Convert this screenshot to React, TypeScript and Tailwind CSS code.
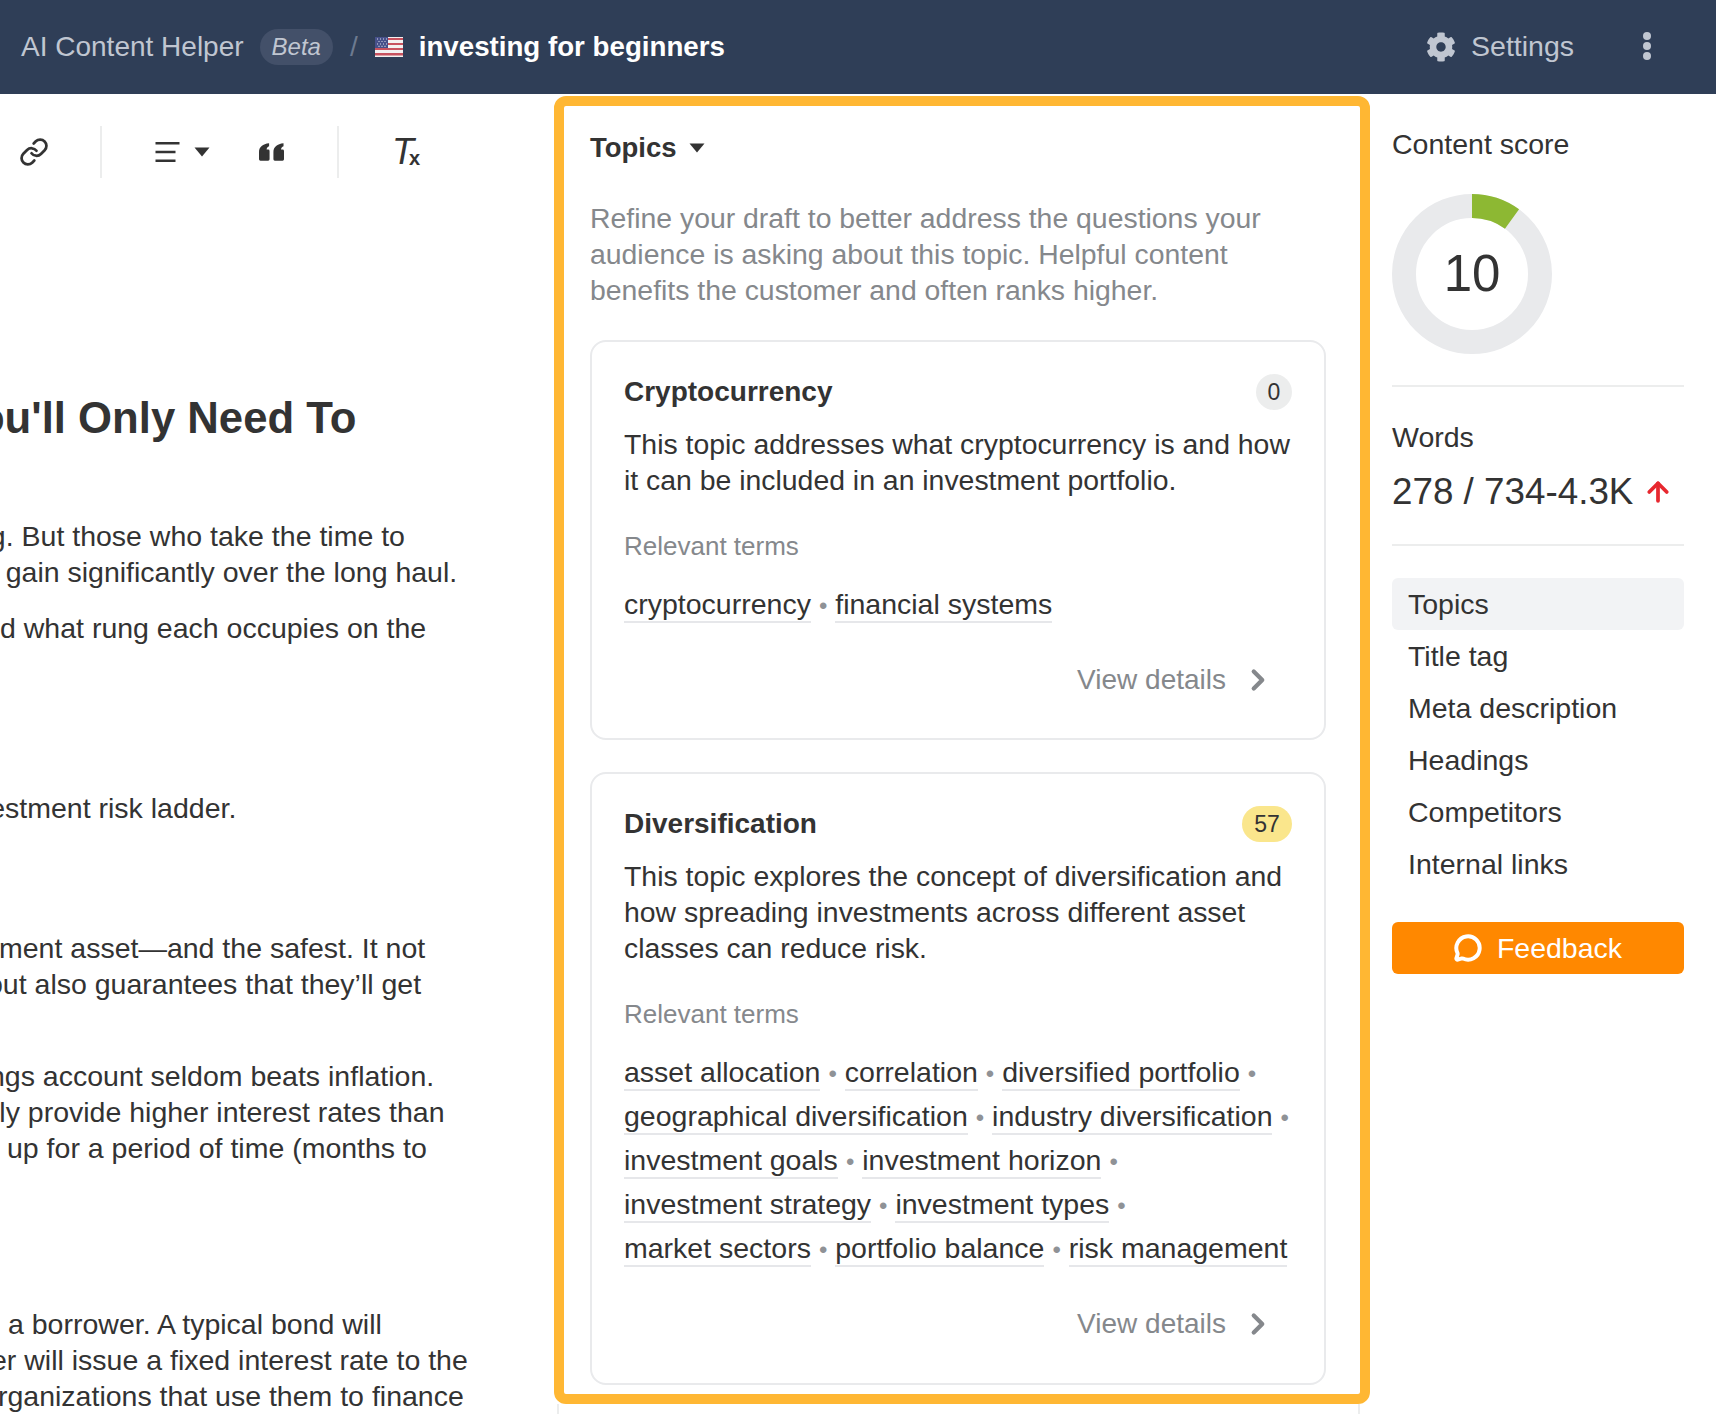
import React from 'react';
import { ArrowUp, ChevronRight, Link, MessageCircle } from 'lucide-react';
import { FaCog } from 'react-icons/fa';

const draftBlocks = [
  { top: 0, lines: [{ text: 'ng. But those who take the time to', x: -26 }, { text: 'to gain significantly over the long haul.', x: -26 }] },
  { top: 20, lines: [{ text: 'd what rung each occupies on the', x: 0 }] },
  { top: 144, lines: [{ text: 'vestment risk ladder.', x: -25 }] },
  { top: 104, lines: [{ text: 'ment asset—and the safest. It not', x: -1 }, { text: 'out also guarantees that they’ll get', x: -13 }] },
  { top: 56, lines: [{ text: 'ngs account seldom beats inflation.', x: -11 }, { text: 'lly provide higher interest rates than', x: -7 }, { text: 'up for a period of time (months to', x: 7 }] },
  { top: 140, lines: [{ text: 'a borrower. A typical bond will', x: 8 }, { text: 'er will issue a fixed interest rate to the', x: -9 }, { text: 'rganizations that use them to finance', x: -2 }] },
];

const navItems = ['Topics', 'Title tag', 'Meta description', 'Headings', 'Competitors', 'Internal links'];

function Caret({ className }: { className: string }) {
  return (
    <svg viewBox="0 0 16 10" className={className} fill="currentColor">
      <path d="M0.5 0.5h15L8 9.5z" />
    </svg>
  );
}

function Flag() {
  return (
    <svg viewBox="0 0 28 20" className="w-[28px] h-[20px] shrink-0">
      <rect width="28" height="20" fill="#f4f1f1" />
      <path d="M0 1h28v2H0zM0 6h28v2H0zM0 11h28v2H0zM0 16h28v2.5H0z" fill="#c8525f" />
      <rect width="13" height="11" fill="#46508a" />
      <path d="M2 2h1M5 2h1M8 2h1M11 2h1M3.5 4.5h1M6.5 4.5h1M9.5 4.5h1M2 7h1M5 7h1M8 7h1M11 7h1M3.500 9.300h1M6.500 9.300h1M9.500 9.300h1" stroke="#d9dce8" strokeWidth="1.2" />
    </svg>
  );
}

function Terms({ items }: { items: string[] }) {
  return (
    <div className="text-[#333] text-[28.500px] leading-[44px]">
      {items.map((term, i) => (
        <React.Fragment key={term}>
          <span className="whitespace-nowrap border-b-2 border-[#e6e7ea] pb-[1px]">{term}</span>
          {i < items.length - 1 && <span className="text-[#8f9296] text-[24px] leading-none ml-[8px]">•</span>}{' '}
        </React.Fragment>
      ))}
    </div>
  );
}

function TopicCard({ title, score, badge, text, terms, className }: { title: string; score: string; badge: string; text: string; terms: string[]; className: string }) {
  return (
    <div className={`border-2 border-[#e9eaec] rounded-[16px] px-[32px] ${className}`}>
      <div className="flex items-center justify-between h-[38px] mt-[31px]">
        <span className="text-[28px] font-bold text-[#333]">{title}</span>
        <span className={`h-[36px] rounded-full flex items-center justify-center text-[23px] text-[#333] ${badge}`}>{score}</span>
      </div>
      <p className="text-[#333] text-[28.400px] leading-[36px] mt-[15px] -mr-[2px]">{text}</p>
      <div className="text-[#85888c] text-[26px] leading-[36px] mt-[30px] mb-[18px]">Relevant terms</div>
      <Terms items={terms} />
      <div className="flex items-center justify-end text-[#85888c] text-[28px] leading-[36px] mt-[36px] mr-[24px]">
        <span>View details</span>
        <ChevronRight className="w-[34px] h-[34px] ml-[15px] -mr-[7px]" strokeWidth={3} />
      </div>
    </div>
  );
}

export default function App() {
  return (
    <div className="w-[1716px] h-[1414px] overflow-hidden bg-white flex flex-col font-['Liberation_Sans',Arial,sans-serif]">
      <header className="h-[94px] shrink-0 bg-[#2f3e57] flex items-center pl-[21px] pr-[65px] text-[28px]">
        <span className="text-[#c0c6d1]">AI Content Helper</span>
        <span className="ml-[16px] h-[36px] px-[12px] rounded-full bg-[#435069] text-[#c0c6d1] italic text-[24px] flex items-center">Beta</span>
        <span className="ml-[17px] mr-[17px] text-[#6d7a90]">/</span>
        <Flag />
        <span className="ml-[16px] text-white font-bold text-[27.700px]">investing for beginners</span>
        <FaCog className="ml-auto -translate-x-[2px] text-[#c0c6d1] w-[30px] h-[30px]" />
        <span className="ml-[13px] -mt-[2px] text-[#c0c6d1] text-[28.500px]">Settings</span>
        <span className="ml-[69px] -mt-[2px] flex flex-col gap-[2px]">
          <span className="w-[8px] h-[8px] rounded-full bg-[#c0c6d1]" />
          <span className="w-[8px] h-[8px] rounded-full bg-[#c0c6d1]" />
          <span className="w-[8px] h-[8px] rounded-full bg-[#c0c6d1]" />
        </span>
      </header>

      <div className="flex flex-1 min-h-0">
        <main className="w-[554px] shrink-0 overflow-hidden text-[#333]">
          <div className="flex items-center h-[54px] mt-[31px] text-[#333]">
            <Link className="w-[30px] h-[30px] ml-[19px]" strokeWidth={2.2} />
            <span className="w-[2px] h-[52px] bg-[#eceded] ml-[51px]" />
            <svg viewBox="0 0 24 20" className="w-[25px] h-[20px] ml-[53px]" fill="currentColor">
              <path d="M0 0h24v2.400H0zM0 8.800h20v2.400H0zM0 17.600h20V20H0z" />
            </svg>
            <Caret className="w-[16px] h-[10px] ml-[14px]" />
            <svg viewBox="0 0 26 18" className="w-[25px] h-[18px] ml-[49px]" fill="currentColor">
              <path d="M10.500 0v3C9 3.600 8 5 7.900 6.500h1.600a1.500 1.500 0 0 1 1.500 1.500v8.500a1.500 1.500 0 0 1-1.500 1.500h-8A1.500 1.500 0 0 1 0 16.500V9C0 4 4 .6 10.500 0zM25.500 0v3c-1.500.6-2.500 2-2.600 3.500h1.600A1.500 1.500 0 0 1 26 8v8.500a1.500 1.500 0 0 1-1.500 1.500h-8a1.500 1.500 0 0 1-1.500-1.500V9c0-5 4-8.400 10.500-9z" />
            </svg>
            <span className="w-[2px] h-[52px] bg-[#eceded] ml-[53px]" />
            <span className="ml-[53px] relative italic text-[36px] leading-none">T<span className="not-italic font-bold text-[20px] absolute left-[17px] top-[14px]">x</span></span>
          </div>

          <h1 className="text-[43.700px] leading-[50px] font-bold whitespace-nowrap mt-[214px] -ml-[48px] text-[#333]">You'll Only Need To</h1>

          <div className="mt-[75px] text-[28.500px] leading-[36px] whitespace-nowrap">
            {draftBlocks.map((block, i) => (
              <div key={i} style={{ marginTop: block.top }}>
                {block.lines.map((line) => (
                  <div key={line.text} style={{ marginLeft: line.x }}>{line.text}</div>
                ))}
              </div>
            ))}
          </div>
        </main>

        <section className="w-[816px] shrink-0 flex flex-col">
          <div className="mt-[2px] h-[1308px] shrink-0 border-[10px] border-[#ffb733] rounded-[12px] bg-white pl-[26px] pr-[34px] overflow-hidden">
            <div className="flex items-center h-[36px] mt-[24px] text-[#333]">
              <span className="text-[27.500px] font-bold">Topics</span>
              <Caret className="w-[16px] h-[10px] ml-[12px]" />
            </div>
            <p className="text-[#85888c] text-[28.400px] leading-[36px] mt-[34px] pr-[36px]">
              Refine your draft to better address the questions your audience is asking about this topic. Helpful content benefits the customer and often ranks higher.
            </p>
            <TopicCard
              className="h-[400px] mt-[32px]"
              title="Cryptocurrency"
              score="0"
              badge="w-[36px] bg-[#eceded]"
              text="This topic addresses what cryptocurrency is and how it can be included in an investment portfolio."
              terms={['cryptocurrency', 'financial systems']}
            />
            <TopicCard
              className="h-[613px] mt-[32px]"
              title="Diversification"
              score="57"
              badge="w-[50px] bg-[#fae68c]"
              text="This topic explores the concept of diversification and how spreading investments across different asset classes can reduce risk."
              terms={['asset allocation', 'correlation', 'diversified portfolio', 'geographical diversification', 'industry diversification', 'investment goals', 'investment horizon', 'investment strategy', 'investment types', 'market sectors', 'portfolio balance', 'risk management']}
            />
          </div>
          <div className="flex-1 ml-[3px] mr-[10px] border-x-2 border-[#eceded]" />
        </section>

        <aside className="w-[292px] shrink-0 ml-[22px] text-[#333]">
          <div className="text-[28.500px] leading-[36px] mt-[32px]">Content score</div>
          <div className="relative w-[160px] h-[160px] mt-[32px]">
            <svg viewBox="0 0 160 160" className="w-full h-full">
              <circle cx="80" cy="80" r="68" fill="none" stroke="#e9eaec" strokeWidth="24" />
              <path d="M80 12A68 68 0 0 1 120 25" fill="none" stroke="#8db833" strokeWidth="24" />
            </svg>
            <span className="absolute inset-0 flex items-center justify-center text-[51px]">10</span>
          </div>
          <div className="h-[2px] bg-[#eceded] mt-[31px]" />
          <div className="text-[28.500px] leading-[36px] mt-[32px]">Words</div>
          <div className="flex items-center text-[36.800px] leading-[44px] mt-[15px]">
            278 / 734-4.3K
            <ArrowUp className="w-[30px] h-[30px] ml-[10px] text-[#e7282f]" strokeWidth={3} />
          </div>
          <div className="h-[2px] bg-[#eceded] mt-[30px]" />
          <nav className="mt-[32px]">
            {navItems.map((item, i) => (
              <div key={item} className={`h-[52px] flex items-center px-[16px] text-[28.500px] rounded-[6px] ${i === 0 ? 'bg-[#f2f3f5]' : ''}`}>{item}</div>
            ))}
          </nav>
          <button className="w-full h-[52px] mt-[32px] bg-[#ff8800] text-white text-[28.500px] rounded-[6px] flex items-center justify-center">
            <MessageCircle className="w-[28px] h-[28px] mr-[15px]" strokeWidth={3.4} />
            Feedback
          </button>
        </aside>
      </div>
    </div>
  );
}
